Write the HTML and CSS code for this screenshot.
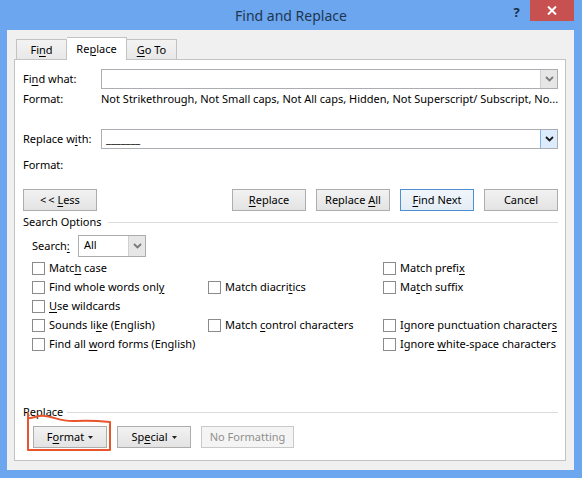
FILE: index.html
```html
<!DOCTYPE html>
<html>
<head>
<meta charset="utf-8">
<link rel="stylesheet" href="styles.css">
</head>
<body>
<div class="window">
  <div class="titlebar">
    <div class="tb-spacer"></div>
    <div class="title">Find and Replace</div>
    <div class="tb-controls">
      <span class="help">?</span>
      <span class="close"><svg width="10" height="9" viewBox="0 0 10 9"><path d="M1 0.5 L9 8.5 M9 0.5 L1 8.5" stroke="#fff" stroke-width="2" fill="none"/></svg></span>
    </div>
  </div>
  <div class="client">
    <div class="tabs">
      <div class="tab tab-find">Fi<u>n</u>d</div>
      <div class="tab tab-replace active">Re<u>p</u>lace</div>
      <div class="tab tab-goto"><u>G</u>o To</div>
    </div>
    <div class="panel">
      <div class="field-row first">
        <span class="lbl">Fi<u>n</u>d what:</span>
        <div class="combo">
          <div class="combo-text"></div>
          <div class="combo-btn"><svg width="9" height="6" viewBox="0 0 9 6"><path d="M1 1 L4.5 4.5 L8 1" stroke="#7a7a7a" stroke-width="1.8" fill="none"/></svg></div>
        </div>
      </div>
      <div class="info-row">
        <span class="lbl">Format:</span>
        <span class="fmt">Not Strikethrough, Not Small caps, Not All caps, Hidden, Not Superscript/ Subscript, No...</span>
      </div>
      <div class="field-row second">
        <span class="lbl">Replace w<u>i</u>th:</span>
        <div class="combo">
          <div class="combo-text">_______</div>
          <div class="combo-btn focus"><svg width="9" height="6" viewBox="0 0 9 6"><path d="M1 1 L4.5 4.5 L8 1" stroke="#1a1a1a" stroke-width="1.8" fill="none"/></svg></div>
        </div>
      </div>
      <div class="info-row second-fmt">
        <span class="lbl">Format:</span>
      </div>
      <div class="btn-row">
        <button class="btn"><span>&lt;&thinsp;&lt; <u>L</u>ess</span></button>
        <div class="btn-group">
          <button class="btn"><span><u>R</u>eplace</span></button>
          <button class="btn"><span>Replace <u>A</u>ll</span></button>
          <button class="btn default"><span><u>F</u>ind Next</span></button>
          <button class="btn"><span>Cancel</span></button>
        </div>
      </div>
      <div class="section-head options-head"><span>Search Options</span></div>
      <div class="search-row">
        <span class="search-lbl">Search<u>:</u></span>
        <div class="select">
          <span class="select-text">All</span>
          <span class="select-btn"><svg width="9" height="6" viewBox="0 0 9 6"><path d="M1 1 L4.5 4.5 L8 1" stroke="#7a7a7a" stroke-width="1.8" fill="none"/></svg></span>
        </div>
      </div>
      <div class="checks">
        <label class="chk"><span class="box"></span><span class="ct">Matc<u>h</u> case</span></label>
        <span></span>
        <label class="chk"><span class="box"></span><span class="ct">Match prefi<u>x</u></span></label>

        <label class="chk"><span class="box"></span><span class="ct">Find whole words onl<u>y</u></span></label>
        <label class="chk"><span class="box"></span><span class="ct">Match diacri<u>t</u>ics</span></label>
        <label class="chk"><span class="box"></span><span class="ct">Ma<u>t</u>ch suffix</span></label>

        <label class="chk"><span class="box"></span><span class="ct"><u>U</u>se wildcards</span></label>
        <span></span>
        <span></span>

        <label class="chk"><span class="box"></span><span class="ct">Sounds li<u>k</u>e (English)</span></label>
        <label class="chk"><span class="box"></span><span class="ct">Match <u>c</u>ontrol characters</span></label>
        <label class="chk"><span class="box"></span><span class="ct">Ignore punctuation character<u>s</u></span></label>

        <label class="chk"><span class="box"></span><span class="ct">Find all <u>w</u>ord forms (English)</span></label>
        <span></span>
        <label class="chk"><span class="box"></span><span class="ct">Ignore <u>w</u>hite-space characters</span></label>
      </div>
      <div class="section-head replace-head"><span>Replace</span></div>
      <div class="fmt-buttons">
        <button class="btn menu"><span>F<u>o</u>rmat</span><svg width="5" height="3" viewBox="0 0 5 3"><path d="M0 0 L5 0 L2.5 3 Z" fill="#222"/></svg></button>
        <button class="btn menu"><span>Sp<u>e</u>cial</span><svg width="5" height="3" viewBox="0 0 5 3"><path d="M0 0 L5 0 L2.5 3 Z" fill="#222"/></svg></button>
        <button class="btn disabled nofmt"><span>No Formatting</span></button>
      </div>
      <svg class="annot" width="100" height="46" viewBox="0 0 100 46"><path d="M4 3 L4 40 L86 40 L86 12 C76 11 66 10 51 11 C38 12 31 7 21 6 C13 5 8 9 5 8" stroke="#e8542b" stroke-width="2" fill="none" stroke-linejoin="round" stroke-linecap="round"/></svg>
    </div>
  </div>
</div>
</body>
</html>
```

FILE: styles.css
```css
* { box-sizing: border-box; }
html, body { margin: 0; padding: 0; }
body {
  font-family: "Noto Sans", "Open Sans", sans-serif;
  font-size: 11px;
  color: #000;
  background: #6ba6ee;
}
u { text-decoration: underline; text-underline-offset: 2px; }

.window {
  width: 582px;
  height: 478px;
  background: #6ba6ee;
  display: flex;
  flex-direction: column;
}

.titlebar {
  height: 30px;
  display: flex;
  flex: none;
}
.tb-spacer { width: 77px; }
.title {
  flex: 1;
  text-align: center;
  font-size: 14px;
  line-height: 31px;
  color: #1f3653;
}
.tb-controls {
  width: 77px;
  display: flex;
  align-items: flex-start;
}
.help {
  width: 23px;
  text-align: center;
  font-weight: bold;
  font-size: 13px;
  line-height: 24px;
  color: #1a2e4a;
}
.close {
  width: 44px;
  height: 21px;
  margin-left: 2px;
  background: #c75050;
  display: flex;
  align-items: center;
  justify-content: center;
}

.client {
  flex: 1;
  margin: 0 8px 8px 7px;
  background: #f0f0f0;
  padding: 7px 0 0 7px;
}

.tabs {
  display: flex;
  align-items: flex-end;
  height: 22px;
  padding-left: 2px;
}
.tab {
  height: 20px;
  border: 1px solid #c3c3c3;
  border-bottom: none;
  background: linear-gradient(#f3f3f3, #e8e8e8);
  text-align: center;
  line-height: 19px;
}
.tab-find { width: 51px; }
.tab-goto { width: 50px; border-left: none; }
.tab.active {
  width: 60px;
  height: 23px;
  margin-bottom: -1px;
  background: #fff;
  position: relative;
  z-index: 1;
  line-height: 21px;
  border-left: none;
}

.panel {
  position: relative;
  width: 552px;
  height: 402px;
  background: #fff;
  border: 1px solid #c3c3c3;
  padding: 0 7px 0 8px;
}

.field-row {
  display: flex;
  align-items: center;
  height: 20px;
}
.field-row.first { margin-top: 9px; }
.field-row.second { margin-top: 20px; }
.lbl { width: 78px; flex: none; padding-bottom: 2px; }
.combo {
  flex: 1;
  height: 20px;
  border: 1px solid #abadb3;
  display: flex;
  background: #fff;
}
.combo-text {
  flex: 1;
  padding-left: 4px;
  line-height: 17px;
}
.combo-btn {
  width: 17px;
  background: #e6e6e6;
  border-left: 1px solid #d0d0d0;
  display: flex;
  align-items: center;
  justify-content: center;
}
.combo-btn.focus {
  background: #dcecfc;
  border-left: 1px solid #7eb4ea;
}

.info-row {
  display: flex;
  align-items: center;
  height: 20px;
  white-space: nowrap;
}
.info-row.second-fmt { margin-top: 6px; }
.fmt { white-space: nowrap; padding-bottom: 2px; }

.btn {
  font-family: inherit;
  font-size: 11px;
  color: #000;
  width: 74px;
  height: 22px;
  border: 1px solid #adadad;
  background: linear-gradient(#f2f2f2, #e3e3e3);
  padding: 0 0 2px 0;
  margin: 0;
  display: inline-flex;
  align-items: center;
  justify-content: center;
  gap: 4px;
  white-space: nowrap;
}
.btn.menu svg { margin-top: 2px; }
.btn.default { border-color: #4d8fd1; background: linear-gradient(#f1f6fb, #e4ecf4); }
.btn.disabled { color: #8f8f8f; border-color: #c9c9c9; background: #f4f4f4; }

.btn-row {
  display: flex;
  margin-top: 14px;
  height: 22px;
}
.btn-group {
  margin-left: auto;
  display: flex;
  gap: 10px;
}

.section-head {
  display: flex;
  align-items: center;
  height: 20px;
}
.section-head span { padding-bottom: 2px; }
.section-head::after {
  content: "";
  flex: 1;
  height: 1px;
  background: #dcdcdc;
  margin-left: 6px;
}
.options-head { margin-top: 1px; }
.replace-head { margin-top: 48px; }
.replace-head::after { margin-left: 4px; }

.search-row {
  display: flex;
  align-items: center;
  height: 22px;
  margin-top: 3px;
  padding-left: 9px;
}
.search-lbl { width: 46px; padding-bottom: 2px; }
.select {
  width: 68px;
  height: 22px;
  border: 1px solid #acacac;
  display: flex;
  background: #fff;
}
.select-text { flex: 1; padding-left: 5px; line-height: 18px; }
.select-btn {
  width: 17px;
  background: #e6e6e6;
  border-left: 1px solid #d0d0d0;
  display: flex;
  align-items: center;
  justify-content: center;
}

.checks {
  margin-top: 2px;
  padding-left: 9px;
  display: grid;
  grid-template-columns: 176px 175px 1fr;
  grid-auto-rows: 19px;
}
.chk {
  display: flex;
  align-items: center;
  white-space: nowrap;
}
.ct { padding-bottom: 2px; }
.box {
  width: 13px;
  height: 13px;
  border: 1px solid #8b8b8b;
  background: #fff;
  margin-right: 4px;
  flex: none;
}

.fmt-buttons {
  display: flex;
  gap: 10px;
  margin-top: 4px;
  padding-left: 10px;
}
.btn.nofmt { width: 93px; }

.annot {
  position: absolute;
  left: 9px;
  top: 350px;
}
```
